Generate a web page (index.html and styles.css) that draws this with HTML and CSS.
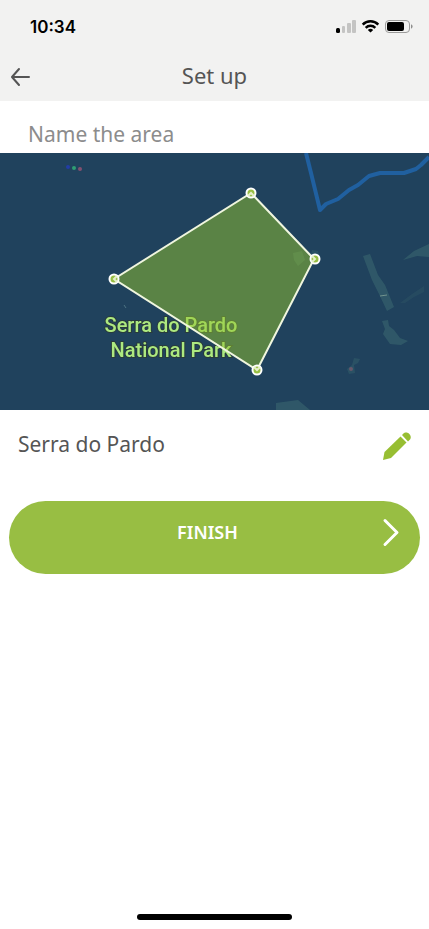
FILE: index.html
```html
<!DOCTYPE html>
<html lang="en">
<head>
    <meta charset="UTF-8">
    <meta name="viewport" content="width=device-width, initial-scale=1.0">
    <title>Set up</title>
    <link rel="stylesheet" href="styles.css">
</head>
<body>
    <header class="top">
        <div class="status-bar">
            <span class="time">10:34</span>
            <svg class="status-icons" viewBox="0 0 78 16" aria-hidden="true">
                <rect x="0" y="9" width="4" height="5" rx="1.5"/>
                <g fill="#c4c4c3">
                    <rect x="6" y="7" width="3" height="7" rx="1"/>
                    <rect x="11" y="4" width="4" height="10" rx="1"/>
                    <rect x="16" y="1" width="4" height="13" rx="1"/>
                </g>
                <g fill="none" stroke="#000" stroke-width="2.5">
                    <path d="M26.7 5.600a11 11 0 0 1 15.600 0"/>
                    <path d="M29.700 8.800a6.800 6.800 0 0 1 9.600 0"/>
                </g>
                <path d="M34.500 13.600l-2.700-2.700a4 4 0 0 1 5.400 0z"/>
                <rect x="49.500" y="1.500" width="24" height="12" rx="3.500" fill="none" stroke="#9b9b9a"/>
                <rect x="51" y="3" width="17" height="9" rx="2"/>
                <path d="M75 5.300v4.400c2.200-.8 2.200-3.600 0-4.400z" fill="#8f8f8e"/>
            </svg>
        </div>
        <nav class="nav-bar">
            <button class="icon-button" type="button" aria-label="Back">
                <svg class="back-icon" viewBox="0 0 20 20">
                    <path d="M9 2L2 10l7 8M2 10h17"/>
                </svg>
            </button>
            <h1 class="title">Set up</h1>
        </nav>
    </header>

    <main>
        <label class="area-label" for="areaName">Name the area</label>

        <svg class="map" viewBox="0 0 429 257" role="img" aria-label="Map of the selected area">
            <rect width="429" height="257" fill="#20425d"/>

            <!-- clearings -->
            <g fill="#3c6b71" opacity=".55">
                <path d="M363 103l7-2 8 21 7 10 9 22-7 4-8-17-7-14z"/>
                <path d="M403 107l11-9 15-7v13l-12-1z"/>
                <path d="M382 168l6-1 1 6 5 4 6 8 8 3-7 4-11-1-7-10 2-5z"/>
                <path d="M400 150l12-9 12-8v6l-10 5-9 6z" opacity=".4"/>
                <path d="M276 250l22-3 12 10h-34z"/>
                <path d="M354 205l6 1-2 4-4 2 1 8-6 1-2-5 5-4z" opacity=".7"/>
                <path d="M312 97l6 1 2 8-10 2z" opacity=".6"/>
                <path d="M293 100l9-2 3 9-7 6-4-6z"/>
            </g>
            <path d="M380 143l7-1" stroke="#72938e"/>
            <circle cx="351" cy="216" r="2" fill="#66576a"/>
            <path d="M124 152l2 3" stroke="#4e7484"/>

            <circle cx="68" cy="14" r="2" fill="#223da6"/>
            <circle cx="74" cy="15" r="2" fill="#2f9e73"/>
            <circle cx="80" cy="16" r="2" fill="#82506f"/>

            <path class="river" d="M306 0l5 20 9 37 6-6 12-5 11-9 9-5 11-9 11-3h24l12-4 5-4 8-8"/>

            <g class="place">
                <text x="171" y="179">Serra do Pardo</text>
                <text x="171" y="204">National Park</text>
            </g>

            <path class="area" d="M251 40l63 66-57 111-143-91z"/>
            <g class="corner">
                <circle cx="251" cy="40" r="4.500"/>
                <circle cx="315" cy="106" r="4.500"/>
                <circle cx="257" cy="217" r="4.500"/>
                <circle cx="114" cy="126" r="4.500"/>
            </g>
            <g class="corner-mark">
                <path d="M248 43l3-3 3 3"/>
                <path d="M312 103l3 3-3 3"/>
                <path d="M254 214l3 3 3-3"/>
                <path d="M117 123l-3 3 3 3"/>
            </g>
        </svg>

        <form class="area-form">
            <div class="name-row">
                <input class="name-input" id="areaName" type="text" value="Serra do Pardo">
                <button class="icon-button" type="button" aria-label="Edit name">
                    <svg class="edit-icon" viewBox="0 0 28 28">
                        <path d="M0 28l1.500-8L17.500 4.500l6 6L8 26z"/>
                        <path d="M19 3l1-1c4-4.500 10.500 2 6.500 6l-1.500 1.500z"/>
                    </svg>
                </button>
            </div>
            <button class="finish-button" type="button">
                <span class="finish-text">FINISH</span>
                <svg class="next-icon" viewBox="0 0 18 30">
                    <path d="M3 3l12 12L3 27"/>
                </svg>
            </button>
        </form>
    </main>

    <div class="home-indicator"></div>
</body>
</html>
```

FILE: styles.css
```css
* {
    margin: 0;
    padding: 0;
    box-sizing: border-box;
}

body {
    display: flex;
    flex-direction: column;
    min-height: 100vh;
    background-color: #fff;
    color: #555;
    font-family: "Noto Sans", sans-serif;
    font-size: 21px;
}

main {
    flex: 1;
}

button {
    border: none;
    background: none;
    font: inherit;
    cursor: pointer;
}

svg {
    display: block;
}

.top {
    background-color: #f2f2f1;
}

.status-bar {
    display: flex;
    align-items: center;
    justify-content: space-between;
    padding: 15px 15px 10px 30px;
}

.time {
    color: #000;
    font-family: Inter, sans-serif;
    font-size: 17px;
    font-weight: 600;
    line-height: 24px;
}

.status-icons {
    width: 78px;
    height: 16px;
}

.nav-bar {
    display: grid;
    grid-template-columns: 20px 1fr 20px;
    align-items: end;
    padding: 0 10px 10px;
    height: 52px;
}

.icon-button {
    flex: none;
}

.back-icon {
    width: 20px;
    height: 20px;
    margin-bottom: 4px;
    fill: none;
    stroke: #555;
    stroke-width: 2;
    stroke-linecap: round;
    stroke-linejoin: round;
}

.title {
    font-size: 22px;
    font-weight: 400;
    line-height: 32px;
    text-align: center;
}

.area-label {
    display: block;
    padding: 17px 28px 3px;
    color: #8c8c8c;
    line-height: 32px;
}

.map {
    width: 100%;
    height: auto;
}

.river {
    fill: none;
    stroke: #2060a0;
    stroke-width: 4;
    stroke-linejoin: round;
}

.place {
    fill: #ade980;
    stroke: #293c3b;
    stroke-width: 2;
    paint-order: stroke;
    font-family: Roboto, sans-serif;
    font-size: 20px;
    font-weight: 500;
    text-anchor: middle;
}

.area {
    fill: rgba(148, 196, 46, 0.5);
    stroke: #f0f6df;
    stroke-width: 2;
}

.corner {
    fill: #97be43;
    stroke: #fff;
    stroke-width: 2;
}

.corner-mark {
    fill: none;
    stroke: #e6f0cc;
    stroke-width: 2;
}

.area-form {
    padding: 14px 9px;
}

.name-row {
    display: flex;
    align-items: flex-start;
    gap: 16px;
    padding: 4px 9px 0;
    height: 42px;
}

.name-input {
    flex: 1;
    min-width: 0;
    border: none;
    outline: none;
    background: none;
    color: #555;
    font: inherit;
    line-height: 32px;
}

.edit-icon {
    width: 28px;
    height: 28px;
    margin-top: 4px;
    fill: #97be32;
}

.finish-button {
    display: grid;
    grid-template-columns: 18px 1fr 18px;
    align-items: center;
    width: 100%;
    margin-top: 35px;
    padding: 16px 20px 26px 6px;
    border-radius: 37px;
    background-color: #98be43;
    color: #fff;
}

.finish-text {
    grid-column: 2;
    font-size: 18px;
    font-weight: 600;
    line-height: 31px;
}

.next-icon {
    width: 18px;
    height: 31px;
    fill: none;
    stroke: #fff;
    stroke-width: 3;
    stroke-linecap: round;
    stroke-linejoin: round;
}

.home-indicator {
    width: 36%;
    height: 6px;
    margin: 0 auto 9px;
    border-radius: 3px;
    background-color: #000;
}
```
